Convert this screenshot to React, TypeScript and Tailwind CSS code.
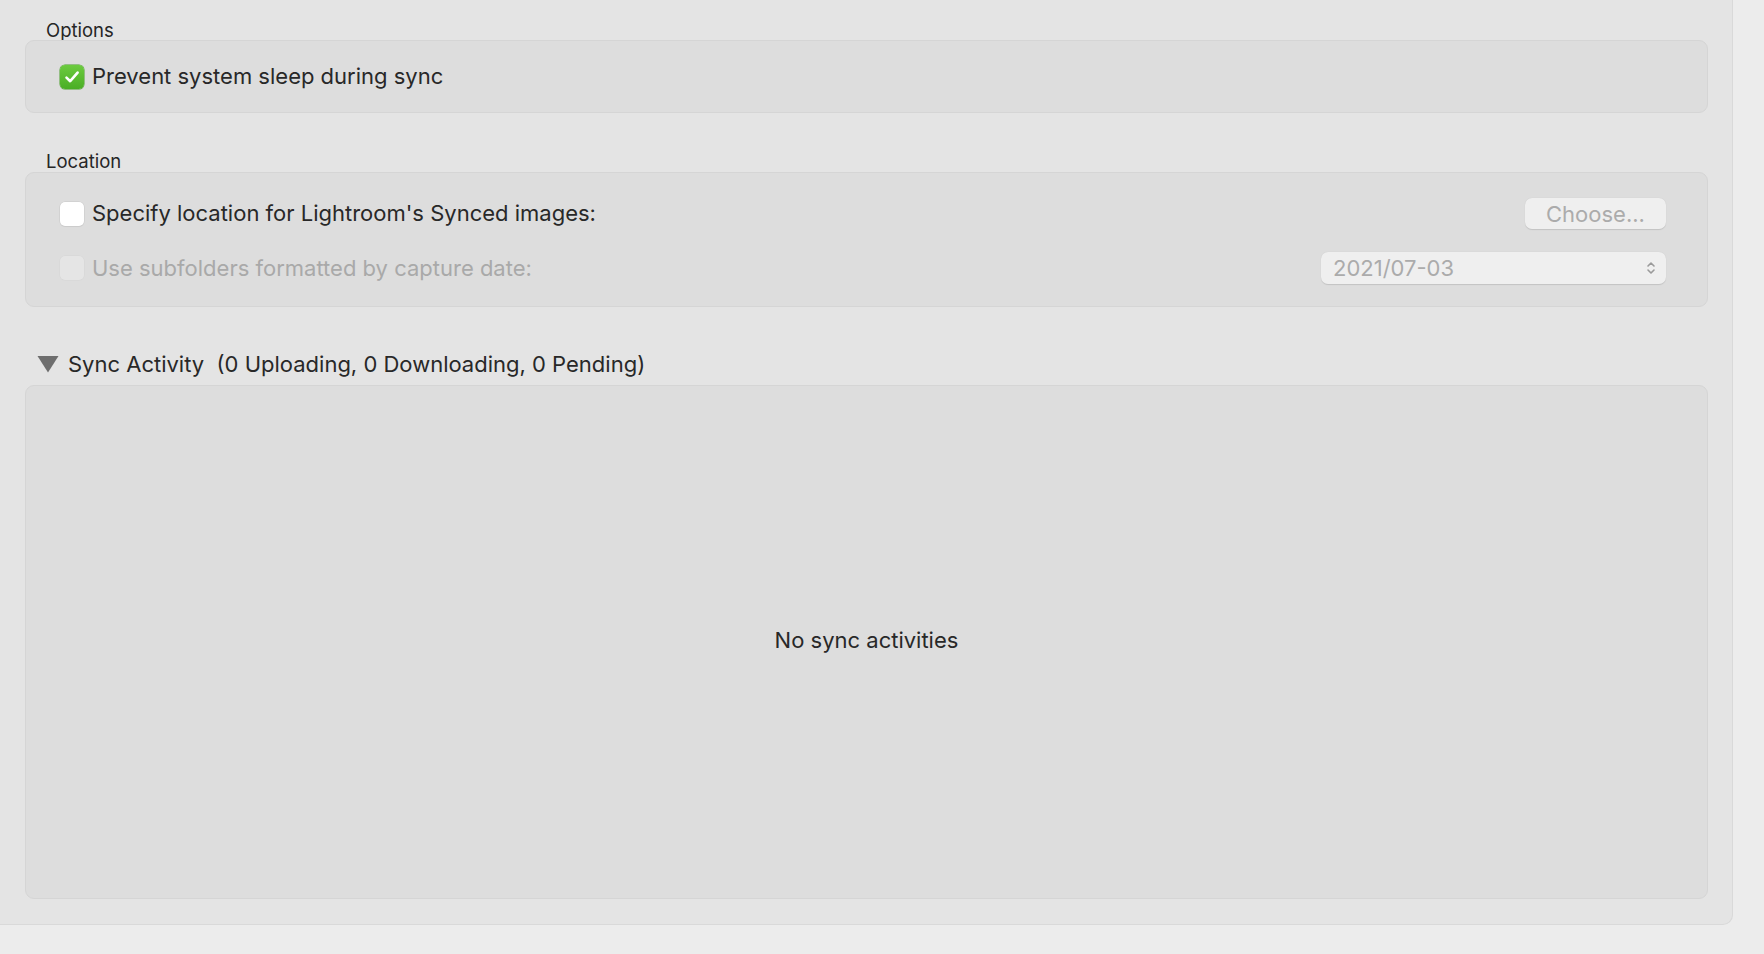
import { useState } from "react";

function CheckBox({
  checked,
  disabled,
  onToggle,
}: {
  checked: boolean;
  disabled?: boolean;
  onToggle?: () => void;
}) {
  if (checked) {
    return (
      <button
        onClick={onToggle}
        className="flex h-[24px] w-[24px] shrink-0 items-center justify-center rounded-[5px] bg-gradient-to-b from-[#6ccb3f] to-[#4aae25] shadow-[0_0_0_0.5px_#4a9e2a]"
      >
        <svg width="16" height="16" viewBox="0 0 16 16" fill="none">
          <path
            d="M2.5 8.6 L6.2 12.2 L13.6 3.6"
            stroke="white"
            strokeWidth="2.6"
            strokeLinecap="round"
            strokeLinejoin="round"
          />
        </svg>
      </button>
    );
  }
  return (
    <button
      onClick={disabled ? undefined : onToggle}
      className={
        disabled
          ? "h-[24px] w-[24px] shrink-0 rounded-[5px] bg-[#e5e5e5] shadow-[0_0_0_0.5px_#d6d6d6]"
          : "h-[24px] w-[24px] shrink-0 rounded-[5px] bg-white shadow-[0_0_0_0.5px_#c8c8c8,0_1px_1px_rgba(0,0,0,0.06)]"
      }
    />
  );
}

function GroupLabel({ children }: { children: string }) {
  return (
    <div className="h-[22px] pl-[21px] text-[18.5px] leading-[22px] text-[#262626]">
      {children}
    </div>
  );
}

export default function App() {
  const [preventSleep, setPreventSleep] = useState<boolean>(true);
  const [customLocation, setCustomLocation] = useState<boolean>(false);
  const [activityOpen, setActivityOpen] = useState<boolean>(true);

  return (
    <div
      className="h-[954px] w-full bg-[#ececec]"
      style={{ fontFamily: "Inter, 'Noto Sans', sans-serif" }}
    >
      <div className="flex h-[925px] w-[1733px] flex-col rounded-br-[10px] border-r border-b border-[#d9d9d9] bg-[#e4e4e4] pt-[19px] pr-[24px] pl-[25px]">
        {/* options */}
        <GroupLabel>Options</GroupLabel>
        <div className="mt-[-1px] flex h-[73px] items-center gap-[8px] rounded-[9px] border border-[#d5d5d5] bg-[#dddddd] pl-[34px]">
          <CheckBox
            checked={preventSleep}
            onToggle={() => setPreventSleep(!preventSleep)}
          />
          <span className="text-[22px] text-[#282828]">
            Prevent system sleep during sync
          </span>
        </div>

        {/* location */}
        <div className="mt-[37px]">
          <GroupLabel>Location</GroupLabel>
        </div>
        <div className="flex flex-col gap-[23px] rounded-[9px] border border-[#d5d5d5] bg-[#dddddd] pt-[25px] pr-[41px] pb-[22px] pl-[34px]">
          <div className="flex h-[31px] items-center justify-between">
            <div className="flex items-center gap-[8px]">
              <CheckBox
                checked={customLocation}
                onToggle={() => setCustomLocation(!customLocation)}
              />
              <span className="text-[22px] text-[#282828]">
                Specify location for Lightroom's Synced images:
              </span>
            </div>
            <button className="h-[31px] w-[141px] rounded-[7px] bg-[#efefef] text-[22px] text-[#ababab] shadow-[0_0.5px_1px_rgba(0,0,0,0.12)]">
              Choose...
            </button>
          </div>
          <div className="flex h-[32px] items-center justify-between">
            <div className="flex items-center gap-[8px]">
              <CheckBox checked={false} disabled />
              <span className="text-[22px] text-[#a9a9a9]">
                Use subfolders formatted by capture date:
              </span>
            </div>
            <div className="flex h-[32px] w-[345px] items-center justify-between rounded-[7px] bg-[#efefef] pr-[10px] pl-[12px] shadow-[0_0.5px_1px_rgba(0,0,0,0.12)]">
              <span className="text-[22px] text-[#ababab]">2021/07-03</span>
              <svg width="10" height="16" viewBox="0 0 10 16" fill="none">
                <path
                  d="M2 6 L5 3 L8 6 M2 10 L5 13 L8 10"
                  stroke="#9a9a9a"
                  strokeWidth="1.6"
                  strokeLinecap="round"
                  strokeLinejoin="round"
                />
              </svg>
            </div>
          </div>
        </div>

        {/* sync activity */}
        <button
          onClick={() => setActivityOpen(!activityOpen)}
          className="mt-[44px] mb-[8px] flex h-[26px] items-center pl-[12px] text-left"
        >
          <svg
            width="22"
            height="18"
            viewBox="0 0 22 18"
            className={activityOpen ? "" : "-rotate-90"}
          >
            <path d="M0.5 1 L21.5 1 L11 17.5 Z" fill="#6e6e6e" />
          </svg>
          <span className="ml-[9px] text-[22px] whitespace-pre text-[#282828]">
            {"Sync Activity  (0 Uploading, 0 Downloading, 0 Pending)"}
          </span>
        </button>
        {activityOpen && (
          <div className="flex h-[514px] items-center justify-center rounded-[9px] border border-[#d5d5d5] bg-[#dddddd] pb-[4px]">
            <span className="text-[22px] text-[#282828]">
              No sync activities
            </span>
          </div>
        )}
      </div>
    </div>
  );
}
